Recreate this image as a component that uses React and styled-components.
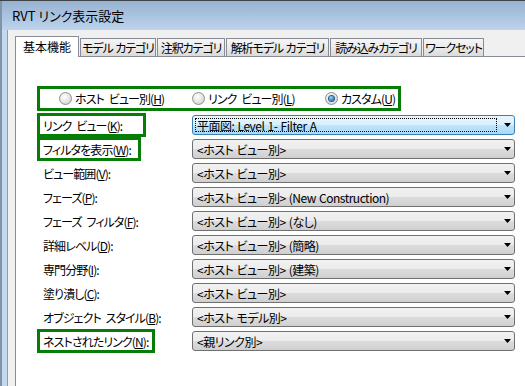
import React from 'react';
import styled, { createGlobalStyle } from 'styled-components';

const GlobalStyle = createGlobalStyle`
  body {
    margin: 0;
    background: #ffffff;
    font-family: "Noto Sans CJK JP", "Noto Sans", sans-serif;
    font-feature-settings: "palt";
    overflow: hidden;
  }
`;

const GREEN = '#067d06';

const Window = styled.div`
  width: 525px;
  height: 386px;
  box-sizing: border-box;
  overflow: hidden;
  display: flex;
  flex-direction: column;
  border-top: 1px solid #3f4347;
  background: #b9d1ea;
`;

const TitleBar = styled.div`
  flex: none;
  height: 29px;
  display: flex;
  align-items: center;
  padding-left: 10px;
  font-size: 13px;
  color: #000;
  background: linear-gradient(#97b2d2, #bcd3eb);
  border-left: 2px solid #7f93ab;
`;

const Frame = styled.div`
  flex: 1;
  display: flex;
  min-height: 0;
`;

const FrameEdge = styled.div`
  flex: none;
  width: 8px;
  background: linear-gradient(
    90deg,
    #7f93ab 0 2px,
    #c4d8ee 2px 7px,
    #8d9db0 7px 8px
  );
`;

const Client = styled.div`
  flex: 1;
  min-width: 0;
  display: flex;
  flex-direction: column;
  padding: 6px 0 0 7px;
  background: #f0f0f0;
`;

const TabStrip = styled.div`
  display: flex;
  align-items: flex-end;
  gap: 1px;
  height: 21px;
  margin-bottom: -1px;
  position: relative;
  z-index: 1;
`;

const Tab = styled.div`
  box-sizing: border-box;
  flex: none;
  width: ${p => p.w}px;
  height: ${p => (p.selected ? 21 : 18)}px;
  margin-bottom: ${p => (p.selected ? 0 : 1)}px;
  padding-bottom: ${p => (p.selected ? 2 : 0)}px;
  display: flex;
  align-items: center;
  justify-content: center;
  white-space: pre;
  font-size: 12px;
  letter-spacing: ${p => (p.selected ? 0 : -1.1)}px;
  word-spacing: 1px;
  color: #000;
  border: 1px solid #898c95;
  border-bottom: none;
  background: ${p =>
    p.selected ? '#ffffff' : 'linear-gradient(#f5f5f5, #e9e9e9 55%, #dadada)'};
`;

const Panel = styled.div`
  flex: 1;
  background: #ffffff;
  border-left: 1px solid #898c95;
  border-top: 1px solid #898c95;
  padding-top: 32px;
`;

const RadioGroup = styled.div`
  box-sizing: border-box;
  width: 358px;
  height: 19px;
  margin-left: 24px;
  padding-left: 19px;
  display: grid;
  grid-template-columns: repeat(3, 133px);
  align-items: center;
  outline: 3px solid ${GREEN};
`;

const RadioItem = styled.label`
  display: flex;
  align-items: center;
  gap: 3px;
  font-size: 12px;
  letter-spacing: -0.9px;
  word-spacing: 3px;
  white-space: pre;
`;

const RadioCircle = styled.span`
  box-sizing: border-box;
  flex: none;
  width: 13px;
  height: 13px;
  border-radius: 50%;
  border: 1px solid #8e8f8f;
  background: radial-gradient(circle at 40% 35%, #ffffff, #e3e3e3 55%, #c9c9c9);
  display: flex;
  align-items: center;
  justify-content: center;

  &::after {
    content: '';
    display: ${p => (p.checked ? 'block' : 'none')};
    width: 5px;
    height: 5px;
    border-radius: 50%;
    background: radial-gradient(circle at 40% 35%, #9fdcff, #1f6fb5 70%, #0d3f73);
    box-shadow: 0 0 0 1px #2b5d8f;
  }
`;

const Form = styled.div`
  margin-top: 7px;
  display: grid;
  grid-template-columns: 176px 323px;
  grid-auto-rows: 20px;
  row-gap: 4px;
`;

const LabelCell = styled.div`
  display: flex;
  align-items: center;
  padding-left: 24px;
`;

const Label = styled.span`
  box-sizing: border-box;
  height: ${p => (p.mark ? 18 : 16)}px;
  width: ${p => (p.mark ? `${p.mark}px` : 'auto')};
  padding-left: 3px;
  display: flex;
  align-items: center;
  font-size: 12px;
  letter-spacing: -0.9px;
  word-spacing: 3px;
  white-space: pre;
  outline: ${p => (p.mark ? `3px solid ${GREEN}` : 'none')};

  u {
    text-underline-offset: 1px;
  }
`;

const Select = styled.div`
  box-sizing: border-box;
  height: 20px;
  display: flex;
  align-items: center;
  gap: 7px;
  padding: 0 3px 0 ${p => (p.active ? 2 : 4)}px;
  font-size: 12px;
  letter-spacing: -0.5px;
  word-spacing: 1px;
  white-space: pre;
  border: 1px solid ${p => (p.active ? '#3c7fb1' : '#707070')};
  border-radius: 3px;
  background: ${p =>
    p.active
      ? 'linear-gradient(#eaf6fd, #d9f0fc 50%, #bee6fd 50%, #a7d9f5)'
      : 'linear-gradient(#f2f2f2, #ebebeb 50%, #dddddd 50%, #cfcfcf)'};
`;

const Value = styled.span`
  flex: 1;
  box-sizing: border-box;
  height: ${p => (p.focused ? 14 : 16)}px;
  display: flex;
  align-items: center;
  padding-left: ${p => (p.focused ? 1 : 0)}px;
  border: ${p => (p.focused ? '1px dotted #000' : 'none')};
`;

const Arrow = () => (
  <svg width="7" height="4" viewBox="0 0 7 4">
    <path d="M0 0H7L3.5 4Z" fill="#000" />
  </svg>
);

const tabs = [
  { title: '基本機能', w: 64, selected: true },
  { title: 'モデル カテゴリ', w: 76 },
  { title: '注釈カテゴリ', w: 68 },
  { title: '解析モデル カテゴリ', w: 103 },
  { title: '読み込みカテゴリ', w: 92 },
  { title: 'ワークセット', w: 61 },
];

const radios = [
  { label: 'ホスト ビュー別', key: 'H' },
  { label: 'リンク ビュー別', key: 'L' },
  { label: 'カスタム', key: 'U', checked: true },
];

const rows = [
  { label: 'リンク ビュー', key: 'K', value: '平面図: Level 1- Filter A', active: true, mark: 103 },
  { label: 'フィルタを表示', key: 'W', value: '<ホスト ビュー別>', mark: 98 },
  { label: 'ビュー範囲', key: 'V', value: '<ホスト ビュー別>' },
  { label: 'フェーズ', key: 'P', value: '<ホスト ビュー別> (New Construction)' },
  { label: 'フェーズ フィルタ', key: 'F', value: '<ホスト ビュー別> (なし)' },
  { label: '詳細レベル', key: 'D', value: '<ホスト ビュー別> (簡略)' },
  { label: '専門分野', key: 'I', value: '<ホスト ビュー別> (建築)' },
  { label: '塗り潰し', key: 'C', value: '<ホスト ビュー別>' },
  { label: 'オブジェクト スタイル', key: 'B', value: '<ホスト モデル別>' },
  { label: 'ネストされたリンク', key: 'N', value: '<親リンク別>', mark: 112 },
];

export default function App() {
  return (
    <>
      <GlobalStyle />
      <Window>
        <TitleBar>RVT リンク表示設定</TitleBar>
        <Frame>
          <FrameEdge />
          <Client>
            <TabStrip>
              {tabs.map(t => (
                <Tab key={t.title} w={t.w} selected={t.selected}>
                  {t.title}
                </Tab>
              ))}
            </TabStrip>
            <Panel>
              <RadioGroup>
                {radios.map(r => (
                  <RadioItem key={r.key}>
                    <RadioCircle checked={r.checked} />
                    <span>
                      {r.label}(<u>{r.key}</u>)
                    </span>
                  </RadioItem>
                ))}
              </RadioGroup>
              <Form>
                {rows.map(r => (
                  <React.Fragment key={r.key}>
                    <LabelCell>
                      <Label mark={r.mark}>
                        {r.label}(<u>{r.key}</u>):
                      </Label>
                    </LabelCell>
                    <Select active={r.active}>
                      <Value focused={r.active}>{r.value}</Value>
                      <Arrow />
                    </Select>
                  </React.Fragment>
                ))}
              </Form>
            </Panel>
          </Client>
        </Frame>
      </Window>
    </>
  );
}
